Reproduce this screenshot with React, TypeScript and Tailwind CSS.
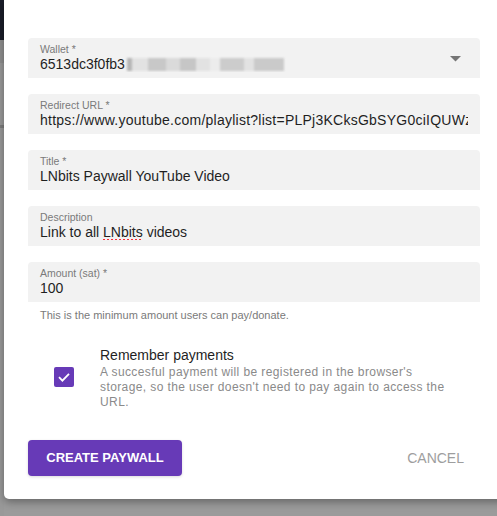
import React from "react";

function Field({ label, children, valueClass = "" }: { label: string; children: React.ReactNode; valueClass?: string }) {
  return (
    <div className="h-[40px] bg-[#f2f2f2] rounded-t-[4px] px-[12px] pt-[5px] relative">
      <div className="text-[10.5px] leading-[13px] text-[#7a7a7a]">{label}</div>
      <div className={`text-[14px] leading-[16px] text-[#1f1f1f] whitespace-nowrap overflow-hidden ${valueClass}`}>{children}</div>
    </div>
  );
}

export default function App() {
  const blur = [
    ["w-[5px]", "bg-[#b5b5b5]"],
    ["w-[16px]", "bg-[#e2e2e2]"],
    ["w-[18px]", "bg-[#c8c8c8]"],
    ["w-[14px]", "bg-[#dadada]"],
    ["w-[16px]", "bg-[#c6c6c6]"],
    ["w-[14px]", "bg-[#e2e2e2]"],
    ["w-[10px]", "bg-[#ececec]"],
    ["w-[24px]", "bg-[#cccccc]"],
    ["w-[10px]", "bg-[#e2e2e2]"],
    ["w-[30px]", "bg-[#cacaca]"],
  ];
  return (
    <div className="w-[497px] h-[516px] bg-[#9b9b9b] overflow-hidden flex font-['Liberation_Sans',Arial,sans-serif]">
      <div className="w-[4px] shrink-0 flex flex-col">
        <div className="h-[40px] bg-[#1a1d29]" />
        <div className="h-[23px] bg-[#8f8f8f]" />
        <div className="h-[62px] bg-[#999999]" />
        <div className="h-[3px] bg-[#7d7d7d]" />
        <div className="flex-1 bg-[#999999]" />
      </div>
      <div className="w-[520px] shrink-0 h-[499px] bg-white rounded-bl-[5px] shadow-[0_3px_8px_rgba(0,0,0,0.35)] pt-[38px] pl-[24px]">
        <div className="w-[452px] flex flex-col gap-[16px]">
          <Field label="Wallet *">
            <span className="inline-flex items-center align-top">
              <span>6513dc3f0fb3</span>
              <span className="inline-flex h-[13px] blur-[0.8px] ml-[2px]">
                {blur.map(([w, c], i) => (
                  <span key={i} className={`${w} ${c} h-full`} />
                ))}
              </span>
            </span>
            <svg className="absolute left-[422px] top-[18px]" width="11" height="6" viewBox="0 0 11 6">
              <path d="M0 0 L11 0 L5.5 5.5 Z" fill="#757575" />
            </svg>
          </Field>
          <Field label="Redirect URL *" valueClass="tracking-[0.25px]">
            https://www.youtube.com/playlist?list=PLPj3KCksGbSYG0ciIQUWzqhMqyo
          </Field>
          <Field label="Title *">LNbits Paywall YouTube Video</Field>
          <Field label="Description">
            Link to all{" "}
            <span className="underline decoration-dotted decoration-red-500 decoration-2 underline-offset-[2px]">LNbits</span>{" "}
            videos
          </Field>
          <Field label="Amount (sat) *">100</Field>
        </div>
        <div className="mt-[6px] pl-[12px] text-[11px] leading-[14px] text-[#7a7a7a]">
          This is the minimum amount users can pay/donate.
        </div>
        <div className="mt-[24px] flex items-start">
          <div className="ml-[26px] mt-[21px] w-[20px] h-[20px] rounded-[2px] bg-[#673ab7] flex items-center justify-center">
            <svg width="20" height="20" viewBox="0 0 20 20">
              <polyline points="5,10.2 8.4,13.6 15,6.8" fill="none" stroke="white" strokeWidth="1.8" />
            </svg>
          </div>
          <div className="ml-[26px] w-[358px]">
            <div className="text-[14px] leading-[18px] text-[#1f1f1f]">Remember payments</div>
            <div className="mt-[1px] text-[12px] leading-[15px] tracking-[0.4px] text-[#8a8a8a]">
              A succesful payment will be registered in the browser's storage, so the user doesn't need to pay again to access the URL.
            </div>
          </div>
        </div>
        <div className="mt-[30px] w-[452px] flex items-center justify-between">
          <div className="w-[154px] h-[36px] rounded-[4px] bg-[#673ab7] text-white text-[13px] font-bold flex items-center justify-center shadow-[0_1px_3px_rgba(0,0,0,0.15)]">
            CREATE PAYWALL
          </div>
          <div className="pr-[16px] text-[14px] text-[#9e9e9e]">CANCEL</div>
        </div>
      </div>
    </div>
  );
}
